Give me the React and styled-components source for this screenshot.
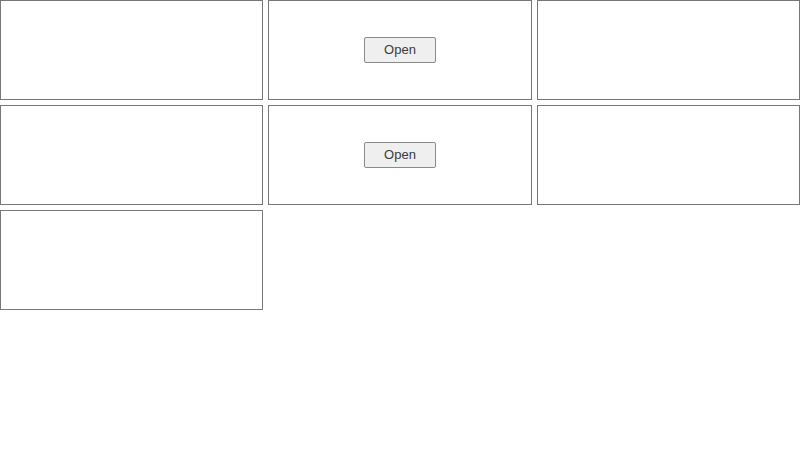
import React from "react";
import styled, { createGlobalStyle } from "styled-components";

const Global = createGlobalStyle`
  html, body { margin: 0; padding: 0; background: #fff; }
  body { font-family: "Liberation Sans", Arial, sans-serif; }
  * { box-sizing: border-box; }
`;

const Grid = styled.div`
  display: grid;
  grid-template-columns: repeat(3, 1fr);
  grid-auto-rows: 100px;
  gap: 5px;
  width: 800px;
`;

const Cell = styled.div`
  border: 1px solid #777;
  display: flex;
  align-items: center;
  justify-content: center;
`;

const OpenButton = styled.button`
  width: 72px;
  height: 26px;
  background: #efefef;
  border: 1px solid #8a8a8a;
  border-radius: 2px;
  font-family: "Liberation Sans", Arial, sans-serif;
  font-size: 13px;
  line-height: 1;
  color: #3a3a3a;
  padding: 0 0 1px;
`;

const cells = [false, true, false, false, true, false, false];

export default function App() {
  return (
    <>
      <Global />
      <Grid>
        {cells.map((hasButton, i) => (
          <Cell key={i}>{hasButton && <OpenButton>Open</OpenButton>}</Cell>
        ))}
      </Grid>
    </>
  );
}
